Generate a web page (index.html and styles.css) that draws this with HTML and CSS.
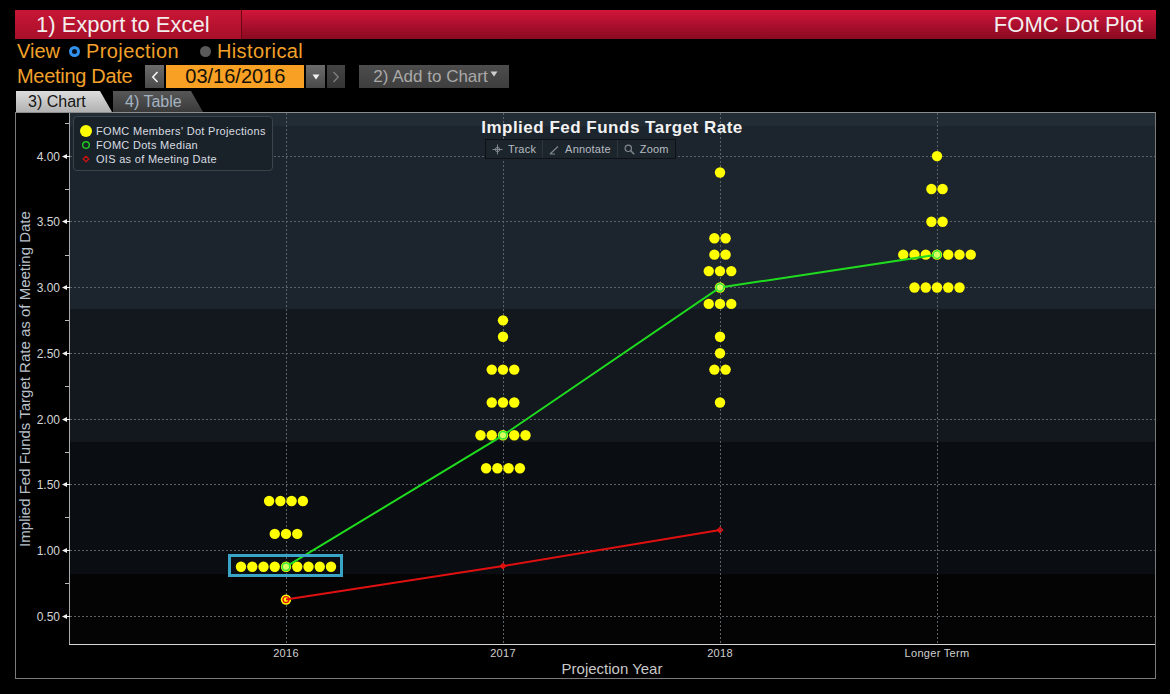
FILE: index.html
```html
<!DOCTYPE html>
<html>
<head>
<meta charset="utf-8">
<title>FOMC Dot Plot</title>
<link rel="stylesheet" href="styles.css">
</head>
<body>
<div class="app">
  <div class="titlebar">
    <div class="export">1) Export to Excel</div>
    <div class="apptitle">FOMC Dot Plot</div>
  </div>
  <div class="row view">
    <span class="lbl">View</span>
    <span class="radio on"></span><span class="opt">Projection</span>
    <span class="radio off"></span><span class="opt">Historical</span>
  </div>
  <div class="row date">
    <span class="lbl lbl-date">Meeting Date</span>
    <span class="nbtn prev"><svg width="8" height="12" viewBox="0 0 8 12"><path d="M6.5 1 L1.8 6 L6.5 11" fill="none" stroke="#f2f2f2" stroke-width="1.6"/></svg></span>
    <span class="datefield">03/16/2016</span>
    <span class="nbtn drop"><svg width="8" height="6" viewBox="0 0 8 6"><path d="M0.5 0.5 H7.5 L4 5.5 Z" fill="#f2f2f2"/></svg></span>
    <span class="nbtn next"><svg width="8" height="12" viewBox="0 0 8 12"><path d="M1.5 1 L6.2 6 L1.5 11" fill="none" stroke="#7c7c7c" stroke-width="1.4"/></svg></span>
    <span class="addbtn">2) Add to Chart<svg class="caret" width="8" height="6" viewBox="0 0 8 6"><path d="M0.5 0.5 H7.5 L4 5.5 Z" fill="#cfcfcf"/></svg></span>
  </div>
  <div class="tabs">
    <div class="tab active">3) Chart</div>
    <div class="tab inactive">4) Table</div>
  </div>
  <div class="frame">
    <svg class="plot" width="1139" height="564" viewBox="0 0 1139 564">
      <g>
        <rect class="b0" x="53" y="0" width="1086" height="13"/>
        <rect class="b1" x="53" y="13" width="1086" height="183"/>
        <rect class="b2" x="53" y="196" width="1086" height="133"/>
        <rect class="b3" x="53" y="329" width="1086" height="132"/>
        <rect class="b4" x="53" y="461" width="1086" height="70"/>
      </g>
      <g class="grid">
        <line x1="54" y1="503.5" x2="1139" y2="503.5"/>
        <line x1="54" y1="437.5" x2="1139" y2="437.5"/>
        <line x1="54" y1="371.5" x2="1139" y2="371.5"/>
        <line x1="54" y1="306.5" x2="1139" y2="306.5"/>
        <line x1="54" y1="240.5" x2="1139" y2="240.5"/>
        <line x1="54" y1="174.5" x2="1139" y2="174.5"/>
        <line x1="54" y1="108.5" x2="1139" y2="108.5"/>
        <line x1="54" y1="43.5" x2="1139" y2="43.5"/>
        <line x1="270.5" y1="0" x2="270.5" y2="531"/>
        <line x1="487.5" y1="0" x2="487.5" y2="531"/>
        <line x1="704.5" y1="0" x2="704.5" y2="531"/>
        <line x1="921.5" y1="0" x2="921.5" y2="531"/>
      </g>
      <line class="yaxis" x1="53.5" y1="0" x2="53.5" y2="531"/>
      <line class="xaxis" x1="53" y1="531.5" x2="1139" y2="531.5"/>
      <g class="minor">
        <line x1="49" y1="470.5" x2="53" y2="470.5"/>
        <line x1="49" y1="404.5" x2="53" y2="404.5"/>
        <line x1="49" y1="339.5" x2="53" y2="339.5"/>
        <line x1="49" y1="273.5" x2="53" y2="273.5"/>
        <line x1="49" y1="207.5" x2="53" y2="207.5"/>
        <line x1="49" y1="142.5" x2="53" y2="142.5"/>
        <line x1="49" y1="76.5" x2="53" y2="76.5"/>
        <line x1="49" y1="10.5" x2="53" y2="10.5"/>
      </g>
      <g class="major">
        <polygon points="46,503.5 51,501 51,506"/><rect x="51" y="503" width="3" height="1"/>
        <polygon points="46,437.5 51,435 51,440"/><rect x="51" y="437" width="3" height="1"/>
        <polygon points="46,371.5 51,369 51,374"/><rect x="51" y="371" width="3" height="1"/>
        <polygon points="46,306.5 51,304 51,309"/><rect x="51" y="306" width="3" height="1"/>
        <polygon points="46,240.5 51,238 51,243"/><rect x="51" y="240" width="3" height="1"/>
        <polygon points="46,174.5 51,172 51,177"/><rect x="51" y="174" width="3" height="1"/>
        <polygon points="46,108.5 51,106 51,111"/><rect x="51" y="108" width="3" height="1"/>
        <polygon points="46,43.5 51,41 51,46"/><rect x="51" y="43" width="3" height="1"/>
      </g>
      <g class="ylab">
        <text x="44" y="508">0.50</text>
        <text x="44" y="442">1.00</text>
        <text x="44" y="376">1.50</text>
        <text x="44" y="311">2.00</text>
        <text x="44" y="245">2.50</text>
        <text x="44" y="179">3.00</text>
        <text x="44" y="113">3.50</text>
        <text x="44" y="48">4.00</text>
      </g>
      <g class="xlab">
        <text x="270" y="544">2016</text>
        <text x="487" y="544">2017</text>
        <text x="704" y="544">2018</text>
        <text x="921" y="544">Longer Term</text>
      </g>
      <text class="xtitle" x="596" y="561">Projection Year</text>
      <text class="ytitle" transform="translate(13.5 266) rotate(-90)">Implied Fed Funds Target Rate as of Meeting Date</text>
      <text class="ctitle" x="596" y="20">Implied Fed Funds Target Rate</text>

      <g class="dots">
        <!-- 2016 -->
        <circle cx="253.1" cy="388" r="5.2"/><circle cx="264.4" cy="388" r="5.2"/><circle cx="275.6" cy="388" r="5.2"/><circle cx="286.9" cy="388" r="5.2"/>
        <circle cx="258.75" cy="420.9" r="5.2"/><circle cx="270" cy="420.9" r="5.2"/><circle cx="281.25" cy="420.9" r="5.2"/>
        <circle cx="225" cy="453.7" r="5.2"/><circle cx="236.25" cy="453.7" r="5.2"/><circle cx="247.5" cy="453.7" r="5.2"/><circle cx="258.75" cy="453.7" r="5.2"/><circle cx="270" cy="453.7" r="5.2"/><circle cx="281.25" cy="453.7" r="5.2"/><circle cx="292.5" cy="453.7" r="5.2"/><circle cx="303.75" cy="453.7" r="5.2"/><circle cx="315" cy="453.7" r="5.2"/>
        <circle cx="270" cy="486.6" r="5.2"/>
        <!-- 2017 -->
        <circle cx="487" cy="207.35" r="5.2"/>
        <circle cx="487" cy="223.8" r="5.2"/>
        <circle cx="475.75" cy="256.6" r="5.2"/><circle cx="487" cy="256.6" r="5.2"/><circle cx="498.25" cy="256.6" r="5.2"/>
        <circle cx="475.75" cy="289.5" r="5.2"/><circle cx="487" cy="289.5" r="5.2"/><circle cx="498.25" cy="289.5" r="5.2"/>
        <circle cx="464.5" cy="322.3" r="5.2"/><circle cx="475.75" cy="322.3" r="5.2"/><circle cx="487" cy="322.3" r="5.2"/><circle cx="498.25" cy="322.3" r="5.2"/><circle cx="509.5" cy="322.3" r="5.2"/>
        <circle cx="470.1" cy="355.2" r="5.2"/><circle cx="481.4" cy="355.2" r="5.2"/><circle cx="492.6" cy="355.2" r="5.2"/><circle cx="503.9" cy="355.2" r="5.2"/>
        <!-- 2018 -->
        <circle cx="704" cy="59.5" r="5.2"/>
        <circle cx="698.4" cy="125.2" r="5.2"/><circle cx="709.6" cy="125.2" r="5.2"/>
        <circle cx="698.4" cy="141.65" r="5.2"/><circle cx="709.6" cy="141.65" r="5.2"/>
        <circle cx="692.75" cy="158.1" r="5.2"/><circle cx="704" cy="158.1" r="5.2"/><circle cx="715.25" cy="158.1" r="5.2"/>
        <circle cx="704" cy="174.5" r="5.2"/>
        <circle cx="692.75" cy="190.9" r="5.2"/><circle cx="704" cy="190.9" r="5.2"/><circle cx="715.25" cy="190.9" r="5.2"/>
        <circle cx="704" cy="223.8" r="5.2"/>
        <circle cx="704" cy="240.2" r="5.2"/>
        <circle cx="698.4" cy="256.6" r="5.2"/><circle cx="709.6" cy="256.6" r="5.2"/>
        <circle cx="704" cy="289.5" r="5.2"/>
        <!-- Longer term -->
        <circle cx="921" cy="43.1" r="5.2"/>
        <circle cx="915.4" cy="75.95" r="5.2"/><circle cx="926.6" cy="75.95" r="5.2"/>
        <circle cx="915.4" cy="108.8" r="5.2"/><circle cx="926.6" cy="108.8" r="5.2"/>
        <circle cx="887.25" cy="141.65" r="5.2"/><circle cx="898.5" cy="141.65" r="5.2"/><circle cx="909.75" cy="141.65" r="5.2"/><circle cx="921" cy="141.65" r="5.2"/><circle cx="932.25" cy="141.65" r="5.2"/><circle cx="943.5" cy="141.65" r="5.2"/><circle cx="954.75" cy="141.65" r="5.2"/>
        <circle cx="898.5" cy="174.5" r="5.2"/><circle cx="909.75" cy="174.5" r="5.2"/><circle cx="921" cy="174.5" r="5.2"/><circle cx="932.25" cy="174.5" r="5.2"/><circle cx="943.5" cy="174.5" r="5.2"/>
      </g>
      <polyline class="median" points="270,453.7 487,322.3 704,174.5 921,141.65"/>
      <polyline class="ois" points="270,486.6 487,453.1 704,417"/>
      <g class="medmark">
        <circle cx="270" cy="453.7" r="3.8"/>
        <circle cx="487" cy="322.3" r="3.8"/>
        <circle cx="704" cy="174.5" r="3.8"/>
        <circle cx="921" cy="141.65" r="3.8"/>
      </g>
      <g class="oismark">
        <circle cx="270" cy="486.6" r="3"/>
        <path d="M487 450.6 L489.5 453.1 L487 455.6 L484.5 453.1 Z"/>
        <path d="M704 414.5 L706.5 417 L704 419.5 L701.5 417 Z"/>
      </g>
      <rect class="hilite" x="213.5" y="442.5" width="112" height="20"/>
    </svg>

    <div class="legend">
      <div class="li"><span class="sym"><svg width="14" height="14" viewBox="0 0 14 14"><circle cx="7" cy="7" r="6" fill="#ffff00"/></svg></span><span>FOMC Members' Dot Projections</span></div>
      <div class="li"><span class="sym"><svg width="14" height="14" viewBox="0 0 14 14"><circle cx="7" cy="7" r="3.3" fill="none" stroke="#1fc41f" stroke-width="1.5"/></svg></span><span>FOMC Dots Median</span></div>
      <div class="li"><span class="sym"><svg width="14" height="14" viewBox="0 0 14 14"><path d="M7 4.2 L9.8 7 L7 9.8 L4.2 7 Z" fill="none" stroke="#c81010" stroke-width="1.3"/></svg></span><span>OIS as of Meeting Date</span></div>
    </div>

    <div class="toolbar">
      <span class="tool"><svg width="11" height="11" viewBox="0 0 11 11"><path d="M5.5 0.5 V10.5 M0.5 5.5 H10.5" stroke="#7f878d" stroke-width="1"/><circle cx="5.5" cy="5.5" r="2.2" fill="none" stroke="#7f878d"/></svg>Track</span>
      <span class="tool"><svg width="11" height="11" viewBox="0 0 11 11"><path d="M1 10 L9 2.5 M1 10 H6" stroke="#7f878d" stroke-width="1.2" fill="none"/></svg>Annotate</span>
      <span class="tool last"><svg width="11" height="11" viewBox="0 0 11 11"><circle cx="4.3" cy="4.3" r="3.2" fill="none" stroke="#7f878d" stroke-width="1.2"/><path d="M6.7 6.7 L10.2 10.2" stroke="#7f878d" stroke-width="1.5"/></svg>Zoom</span>
    </div>
  </div>
</div>
</body>
</html>
```

FILE: styles.css
```css
html, body {
  margin: 0;
  background: #000;
  font-family: "Liberation Sans", Arial, sans-serif;
}

.app {
  padding: 10px 0 0 15px;
  width: 1141px;
}

/* title bar */
.titlebar {
  display: flex;
  justify-content: space-between;
  height: 29px;
  background: linear-gradient(#d3163a, #b01030 45%, #8a0a20);
}
.export {
  box-sizing: border-box;
  width: 227px;
  padding-left: 21px;
  border-right: 1px solid #6a0615;
  background: linear-gradient(#c81636, #a80f2a);
  color: #f3eeee;
  font-size: 22px;
  line-height: 29px;
}
.apptitle {
  padding-right: 13px;
  color: #f3eeee;
  font-size: 22px;
  line-height: 29px;
}

/* control rows */
.row {
  display: flex;
  align-items: center;
  color: #f2a12a;
  font-size: 20px;
}
.view {
  height: 24px;
}
.lbl {
  padding-left: 2px;
}
.opt {
  letter-spacing: 0.4px;
}
.radio {
  box-sizing: border-box;
  width: 11px;
  height: 11px;
  border-radius: 50%;
}
.radio.on {
  margin: 0 6px 0 9px;
  border: 3px solid #3391ee;
  background: #06101c;
}
.radio.off {
  margin: 0 6px 0 21px;
  background: #5a5a5a;
}

.date {
  height: 23px;
  margin-top: 2px;
}
.lbl-date {
  margin-right: 13px;
  letter-spacing: -0.3px;
}
.nbtn {
  display: flex;
  align-items: center;
  justify-content: center;
  width: 19px;
  height: 23px;
  margin-right: 2px;
  background: linear-gradient(#6c6c6c, #4a4a4a);
}
.nbtn.next {
  width: 18px;
  background: linear-gradient(#444, #353535);
}
.datefield {
  width: 138px;
  height: 23px;
  margin-right: 2px;
  background: #f7a023;
  color: #141008;
  font-size: 20px;
  line-height: 23px;
  text-align: center;
}
.addbtn {
  display: flex;
  align-items: center;
  box-sizing: border-box;
  width: 150px;
  height: 23px;
  margin-left: 12px;
  padding-left: 14px;
  background: linear-gradient(#4d4d4d, #3e3e3e);
  color: #a9a9a9;
  font-size: 17px;
}
.caret {
  margin-left: 2px;
  margin-top: -6px;
}

/* tabs */
.tabs {
  display: flex;
  gap: 1px;
  height: 21px;
  margin-top: 3px;
  padding-left: 1px;
}
.tab {
  box-sizing: border-box;
  height: 21px;
  padding-left: 12px;
  font-size: 16px;
  line-height: 22px;
  clip-path: polygon(0 0, calc(100% - 12px) 0, 100% 100%, 0 100%);
}
.tab.active {
  width: 96px;
  background: linear-gradient(#dcdcdc, #b2b2b2);
  color: #151515;
}
.tab.inactive {
  width: 90px;
  background: linear-gradient(#575757, #3a3a3a);
  color: #a4b3c2;
}

/* chart frame */
.frame {
  position: relative;
  width: 1139px;
  height: 565px;
  border: 1px solid #7a7a7a;
  border-top-color: #8c8c8c;
  background: #000;
}
.plot {
  display: block;
}
.b0 { fill: #222c35; }
.b1 { fill: #1c252d; }
.b2 { fill: #12181e; }
.b3 { fill: #0a0d11; }
.b4 { fill: #040405; }

.grid line {
  stroke: #5b6268;
  stroke-width: 1;
  stroke-dasharray: 2 2;
}
.yaxis { stroke: #a8a8a8; stroke-width: 1; }
.xaxis { stroke: #d6d6d6; stroke-width: 1; }
.minor line { stroke: #b8b8b8; stroke-width: 1; }
.major polygon, .major rect { fill: #f0f0f0; }

.ylab text {
  font-size: 12px;
  fill: #d6d6d6;
  text-anchor: end;
}
.xlab text {
  font-size: 11px;
  fill: #d0d0d0;
  text-anchor: middle;
  letter-spacing: 0.3px;
}
.xtitle {
  font-size: 15px;
  fill: #c8c8c8;
  text-anchor: middle;
}
.ytitle {
  font-size: 15px;
  fill: #b9c1c9;
  text-anchor: middle;
}
.ctitle {
  font-size: 17px;
  font-weight: bold;
  fill: #f2f2f2;
  text-anchor: middle;
  letter-spacing: 0.5px;
}

.dots circle { fill: #ffff00; }
.median {
  fill: none;
  stroke: #1fdc1f;
  stroke-width: 2;
}
.ois {
  fill: none;
  stroke: #e01010;
  stroke-width: 2;
}
.medmark circle {
  fill: #d8ff60;
  stroke: #38e838;
  stroke-width: 1.5;
}
.oismark circle, .oismark path {
  fill: none;
  stroke: #e81010;
  stroke-width: 1.4;
}
.hilite {
  fill: none;
  stroke: #3aa4c6;
  stroke-width: 3;
}

/* legend overlay */
.legend {
  position: absolute;
  left: 57px;
  top: 3px;
  box-sizing: border-box;
  width: 200px;
  height: 55px;
  padding: 7px 0 0 5px;
  border: 1px solid #3c444b;
  border-radius: 4px;
  background: #1a2229;
  color: #d9dde1;
  font-size: 11px;
  letter-spacing: 0.3px;
}
.li {
  display: flex;
  align-items: center;
  height: 14px;
}
.sym {
  display: flex;
  width: 17px;
}

/* toolbar overlay */
.toolbar {
  position: absolute;
  left: 469px;
  top: 26px;
  display: flex;
  box-sizing: border-box;
  height: 20px;
  border: 1px solid #0e1216;
  background: #1d252c;
  color: #b6bcc2;
  font-size: 11px;
  letter-spacing: 0.2px;
}
.tool {
  display: flex;
  align-items: center;
  gap: 5px;
  padding: 0 6px 0 6px;
  border-right: 1px solid #2e363d;
}
.tool.last {
  border-right: none;
}
```
